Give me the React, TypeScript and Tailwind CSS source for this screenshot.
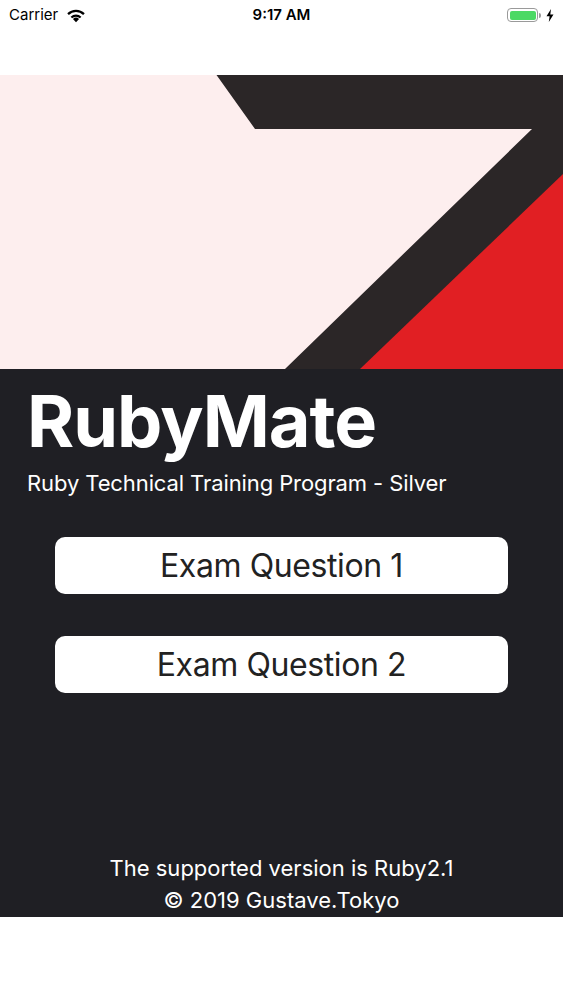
import React from "react";

function StatusBar() {
  return (
    <div className="relative flex h-[30px] items-center justify-between px-[9px] text-[15px] text-black">
      <div className="flex items-center gap-[8px]">
        <span>Carrier</span>
        <svg width="20" height="15" viewBox="0 0 19 14">
          <path d="M9.5 13.5 L6.6 10.4 A4.2 4.2 0 0 1 12.4 10.4 Z" fill="#000" />
          <path d="M4.4 8.2 A7.4 7.4 0 0 1 14.6 8.2 L13.2 9.7 A5.4 5.4 0 0 0 5.8 9.7 Z" fill="#000" />
          <path d="M1.2 4.9 A11.8 11.8 0 0 1 17.8 4.9 L16.3 6.5 A9.6 9.6 0 0 0 2.7 6.5 Z" fill="#000" />
        </svg>
      </div>
      <span className="absolute left-1/2 -translate-x-1/2 font-semibold">9:17 AM</span>
      <div className="flex items-center gap-[5px]">
        <div className="flex items-center">
          <div className="h-[14px] w-[31px] rounded-[4px] border border-[#9a9a9a] p-[1.5px]">
            <div className="h-full w-full rounded-[2px] bg-[#4cd964]" />
          </div>
          <div className="ml-[1px] h-[5px] w-[2px] rounded-r-sm bg-[#9a9a9a]" />
        </div>
        <svg width="8" height="13" viewBox="0 0 8 13">
          <path d="M5 0 L0.5 7.2 H3.6 L2.8 13 L7.5 5.4 H4.3 Z" fill="#000" />
        </svg>
      </div>
    </div>
  );
}

function Banner() {
  return (
    <svg className="block h-[294px] w-full" viewBox="0 0 563 294" preserveAspectRatio="none">
      <rect x="0" y="0" width="563" height="294" fill="#2b2627" />
      <polygon points="0,0 216.5,0 255,54 532,54 285,294 0,294" fill="#fdeeee" />
      <polygon points="563,99 360,294 563,294" fill="#e11f23" />
    </svg>
  );
}

function ExamButton({ label }: { label: string }) {
  return (
    <button className="flex h-[57px] w-full items-center justify-center rounded-[10px] bg-white text-[32px] tracking-[-0.4px] text-[#222222]">
      {label}
    </button>
  );
}

export default function App() {
  return (
    <div className="flex h-[1000px] w-full flex-col bg-white font-['Inter',sans-serif]">
      <StatusBar />
      <div className="h-[45px]" />
      <Banner />

      <div className="flex h-[548px] flex-col bg-[#1f1f24] text-white">
        <h1 className="ml-[27px] mt-[16px] text-[72px] font-bold leading-[72px] tracking-[-1px]">RubyMate</h1>
        <p className="ml-[27px] mt-[15px] text-[22px] leading-[22px] tracking-[-0.1px]">
          Ruby Technical Training Program - Silver
        </p>

        <div className="mx-[55px] mt-[43px] flex flex-col gap-[42px]">
          <ExamButton label="Exam Question 1" />
          <ExamButton label="Exam Question 2" />
        </div>

        <div className="mt-auto mb-[1px] text-center text-[22px] leading-[32px]">
          <p>The supported version is Ruby2.1</p>
          <p>© 2019 Gustave.Tokyo</p>
        </div>
      </div>
    </div>
  );
}
